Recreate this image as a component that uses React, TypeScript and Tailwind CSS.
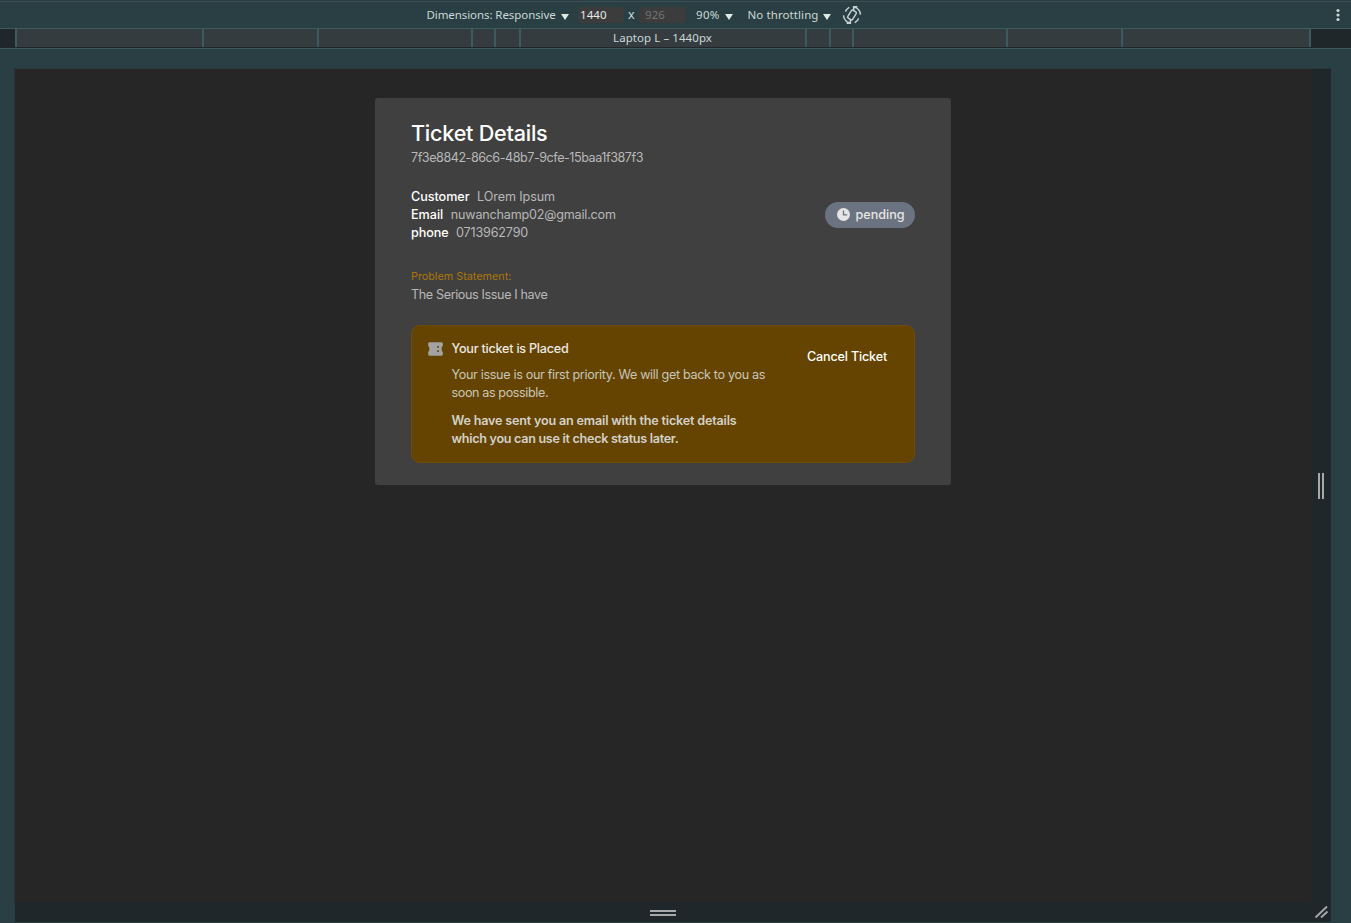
import type { ReactNode } from 'react';

const segments = [
  'w-[187px]',
  'w-[115px]',
  'w-[154px]',
  'w-[23px]',
  'w-[25px]',
  'w-[286px]',
  'w-[24px]',
  'w-[23px]',
  'w-[154px]',
  'w-[115px]',
  'w-[188px]',
];

function Caret() {
  return (
    <svg width="8" height="6" viewBox="0 0 8 6" className="block fill-[#dfe9e6]">
      <path d="M0 0h8L4 6z" />
    </svg>
  );
}

function RotateIcon() {
  return (
    <svg width="20" height="20" viewBox="0 0 20 20" fill="none" stroke="#c5d0d0" strokeWidth="1.5">
      <rect x="7.2" y="5.4" width="5.600" height="9.200" rx="1.200" transform="rotate(32 10 10)" />
      <path d="M7.200 2.200 4.400 4.800a2 2 0 0 0-.5 2M12.800 17.800l2.800-2.600a2 2 0 0 0 .5-2" />
      <path d="M1.500 10.400a8.400 8.400 0 0 0 6.900 7.700M4.600 18.300h3.800v-3.300M18.500 9.600a8.400 8.400 0 0 0-6.900-7.700M15.400 1.700h-3.800v3.300" />
    </svg>
  );
}

function DeviceToolbar() {
  return (
    <header className="flex h-[29px] items-center border-b border-[#3d5a5e] bg-[#293f43] pt-[2px] text-[11.5px] text-[#cbd8d8] shadow-[inset_0_1px_0_#293f43,inset_0_2px_0_#3c4d53]">
      <span className="ml-[426.5px] w-[134.5px] tracking-[-0.08px]">Dimensions: Responsive</span>
      <span className="mt-[3px]"><Caret /></span>
      <span className="ml-[9px] flex h-4 w-[46px] items-center rounded bg-[#3c3c3d] pl-[2px] tracking-[0.1px] text-[#e6e8e8]">1440</span>
      <span className="ml-1 w-[11px] text-[12.5px]">x</span>
      <span className="flex h-4 w-[47px] items-center rounded bg-[#3c3c3d] pl-[6px] tracking-[0.1px] text-[#727576]">926</span>
      <span className="ml-[10px] w-[29px] tracking-[0.3px]">90%</span>
      <span className="mt-[3px]"><Caret /></span>
      <span className="ml-[14.5px] w-[75.5px] tracking-[0.09px]">No throttling</span>
      <span className="mt-[3px]"><Caret /></span>
      <span className="ml-[10.5px]"><RotateIcon /></span>
      <svg className="mr-[10px] ml-auto fill-[#cbd5d5]" width="6" height="14" viewBox="0 0 6 14">
        <circle cx="3" cy="2.5" r="1.6" />
        <circle cx="3" cy="7" r="1.6" />
        <circle cx="3" cy="11.5" r="1.6" />
      </svg>
    </header>
  );
}

function Ruler() {
  return (
    <div className="h-5 border-b border-[#3d5a5e] bg-[#1f272a]">
      <div className="flex h-[18px] pl-[15px] text-[11.5px] leading-[18px] text-[#cbd8d8]">
        {segments.map((width, i) => (
          <div key={i} className={`${width} shrink-0 border-l-2 border-[#3d5a5e] bg-[#343c3f] text-center whitespace-nowrap`}>
            {i === 5 && <span className="pr-px tracking-[0.07px]">Laptop L – 1440px</span>}
          </div>
        ))}
        <div className="w-0.5 bg-[#3d5a5e]" />
      </div>
    </div>
  );
}

function TicketIcon() {
  return (
    <svg width="15" height="14" viewBox="0 0 15 14" className="mt-[16px] shrink-0 fill-[#a3a3a3]">
      <path
        fillRule="evenodd"
        d="M1.600.300h11.800c.8 0 1.400.6 1.400 1.400v2.400c-.8.300-1.200 1.500-1.200 2.900s.4 2.600 1.200 2.900v2.400c0 .8-.6 1.400-1.400 1.400H1.600C.8 13.700.2 13.100.2 12.300V9.900c.8-.3 1.200-1.500 1.200-2.900S1 4.400.2 4.100V1.700C.2.9.8.3 1.600.3zM9.200 4v1.800h1.700V4zm0 4.200V10h1.700V8.200z"
      />
    </svg>
  );
}

function ClockIcon() {
  return (
    <svg width="13" height="13" viewBox="0 0 13 13">
      <circle cx="6.500" cy="6.500" r="6.500" fill="#e5e5e5" />
      <path d="M6.500 2.500v4.300h3.700" fill="none" stroke="#6b7280" strokeWidth="1.300" />
    </svg>
  );
}

function Field({ label, children }: { label: ReactNode; children: ReactNode }) {
  return (
    <div className="flex">
      <dt className="mr-[7.5px] font-medium text-white">{label}</dt>
      <dd className="text-[#b8b8b8]">{children}</dd>
    </div>
  );
}

function TicketCard() {
  return (
    <main className="h-[387px] w-[576px] rounded-[3px] bg-[#404040] px-9 pt-[21px] font-[Inter,sans-serif] text-[12.6px] leading-[18px] text-[#b8b8b8]">
      <h1 className="mb-px text-[21.6px] leading-[29px] font-medium tracking-[-0.24px] text-white">Ticket Details</h1>
      <p className="tracking-[-0.463px]">7f3e8842-86c6-48b7-9cfe-15baa1f387f3</p>

      <div className="mt-[21px] flex justify-between">
        <dl>
          <Field label={<span className="tracking-[-0.04px]">Customer</span>}>
            <span className="tracking-[-0.096px]">LOrem Ipsum</span>
          </Field>
          <Field label="Email">
            <span className="tracking-[-0.195px]">nuwanchamp02@gmail.com</span>
          </Field>
          <Field label={<span className="tracking-[-0.08px]">phone</span>}>
            <span className="tracking-[-0.179px]">0713962790</span>
          </Field>
        </dl>
        <div className="mt-[14px] flex h-[25.5px] w-[90px] items-center gap-1.5 rounded-full bg-[#6b7280] pl-[11.5px] font-medium text-[#e5e5e5]">
          <ClockIcon />
          <span>pending</span>
        </div>
      </div>

      <h2 className="mt-[26px] text-[10.8px] text-[#ab7608]">Problem Statement:</h2>
      <p className="tracking-[-0.375px]">The Serious Issue I have</p>

      <section className="mt-[21px] flex h-[138px] rounded-[9px] border border-[#6f4c05] bg-[#644400] pl-4">
        <TicketIcon />
        <div className="ml-[8.5px] w-[355.5px] pt-[14px] whitespace-nowrap text-[#c9c5bd]">
          <h3 className="font-medium tracking-[-0.227px] text-[#ece9e4]">Your ticket is Placed</h3>
          <p className="mt-2 tracking-[-0.328px]">
            Your issue is our first priority. We will get back to you as
            <br />
            <span className="tracking-[-0.39px]">soon as possible.</span>
          </p>
          <p className="mt-[10px] font-semibold tracking-[-0.189px] text-[#d4d1ca]">
            We have sent you an email with the ticket details
            <br />
            <span className="tracking-[-0.297px]">which you can use it check status later.</span>
          </p>
        </div>
        <button className="mt-[22px] h-[18px] font-medium tracking-[-0.174px] whitespace-nowrap text-white">Cancel Ticket</button>
      </section>
    </main>
  );
}

export default function App() {
  return (
    <div className="flex h-[923px] w-[1351px] flex-col overflow-hidden bg-[#293f43] font-['Noto_Sans',sans-serif]">
      <DeviceToolbar />
      <Ruler />
      <div className="mt-[19px] ml-[14px] flex w-[1317px] border-t border-l border-[#2b3437]">
        <div className="flex h-[833px] w-[1296px] items-start justify-center bg-[#262626] pt-[29px]">
          <TicketCard />
        </div>
        <div className="flex h-[833px] w-5 items-center justify-center gap-0.5 bg-[#1f272a]">
          <div className="h-[26px] w-0.5 bg-[#a8aaaa]" />
          <div className="h-[26px] w-0.5 bg-[#a8aaaa]" />
        </div>
      </div>
      <div className="ml-[15px] flex h-5 w-[1316px] bg-[#1f272a]">
        <div className="flex w-[1296px] flex-col items-center justify-center gap-0.5 pt-[2px]">
          <div className="h-0.5 w-[26px] bg-[#a8aaaa]" />
          <div className="h-0.5 w-[26px] bg-[#a8aaaa]" />
        </div>
        <svg width="20" height="20" viewBox="0 0 20 20" stroke="#a8aaaa" strokeWidth="1.800">
          <path d="M4.500 15.500 16 4.500M10 15.500l6.500-6" />
        </svg>
      </div>
    </div>
  );
}
